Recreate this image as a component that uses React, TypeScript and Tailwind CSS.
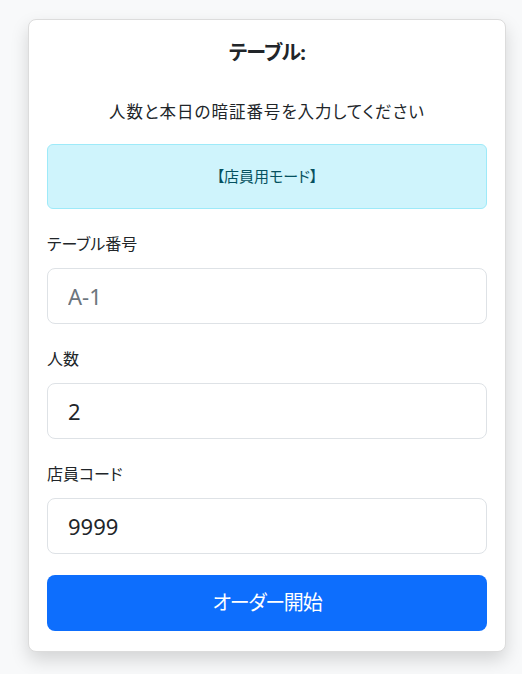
import React from "react";

export default function App() {
  const font = { fontFamily: '"Noto Sans", "Noto Sans CJK JP", sans-serif' } as React.CSSProperties;
  return (
    <div className="min-h-[674px] w-full bg-[#f8f9fa] pt-[19px]" style={font}>
      <div className="ml-[28px] w-[478px] rounded-lg border border-[#dcdcdc] bg-white px-[18px] pt-[18px] pb-[20px] shadow-[0_8px_18px_rgba(0,0,0,0.15)]">
        <h1 className="text-center text-[20px] font-bold leading-[30px] text-[#212529] tracking-[-0.04em] [font-feature-settings:'palt']">テーブル:</h1>
        <p className="mt-[32px] text-center text-[16.5px] leading-[24px] text-[#212529] [font-feature-settings:'palt'] tracking-[0.06em]">
          人数と本日の暗証番号を入力してください
        </p>
        <div className="mt-[20px] flex h-[65px] items-center justify-center rounded-md border border-[#9eeaf9] bg-[#cff4fc] text-[15px] text-[#055160] [font-feature-settings:'palt']">
          【店員用モード】
        </div>
        <div className="mt-[23px] flex flex-col">
          {[
            { label: "テーブル番号", value: "", ph: "A-1" },
            { label: "人数", value: "2", ph: "" },
            { label: "店員コード", value: "9999", ph: "" },
          ].map((f, i) => (
            <div key={i} className={i === 0 ? "" : "mt-[23px]"}>
              <label className="block text-[16px] leading-[24px] text-[#212529] [font-feature-settings:'palt']">{f.label}</label>
              <input
                readOnly
                value={f.value}
                placeholder={f.ph}
                className="mt-[12px] block h-[56px] w-full rounded-lg border border-[#dee2e6] bg-white px-[20px] text-[22px] text-[#212529] outline-none placeholder:text-[#6c757d]"
                style={font}
              />
            </div>
          ))}
        </div>
        <button
          className="mt-[21px] flex h-[56px] w-full items-center justify-center rounded-lg bg-[#0d6efd] text-[20px] text-white tracking-[-0.06em] [font-feature-settings:'palt']"
          style={font}
        >
          オーダー開始
        </button>
      </div>
    </div>
  );
}
